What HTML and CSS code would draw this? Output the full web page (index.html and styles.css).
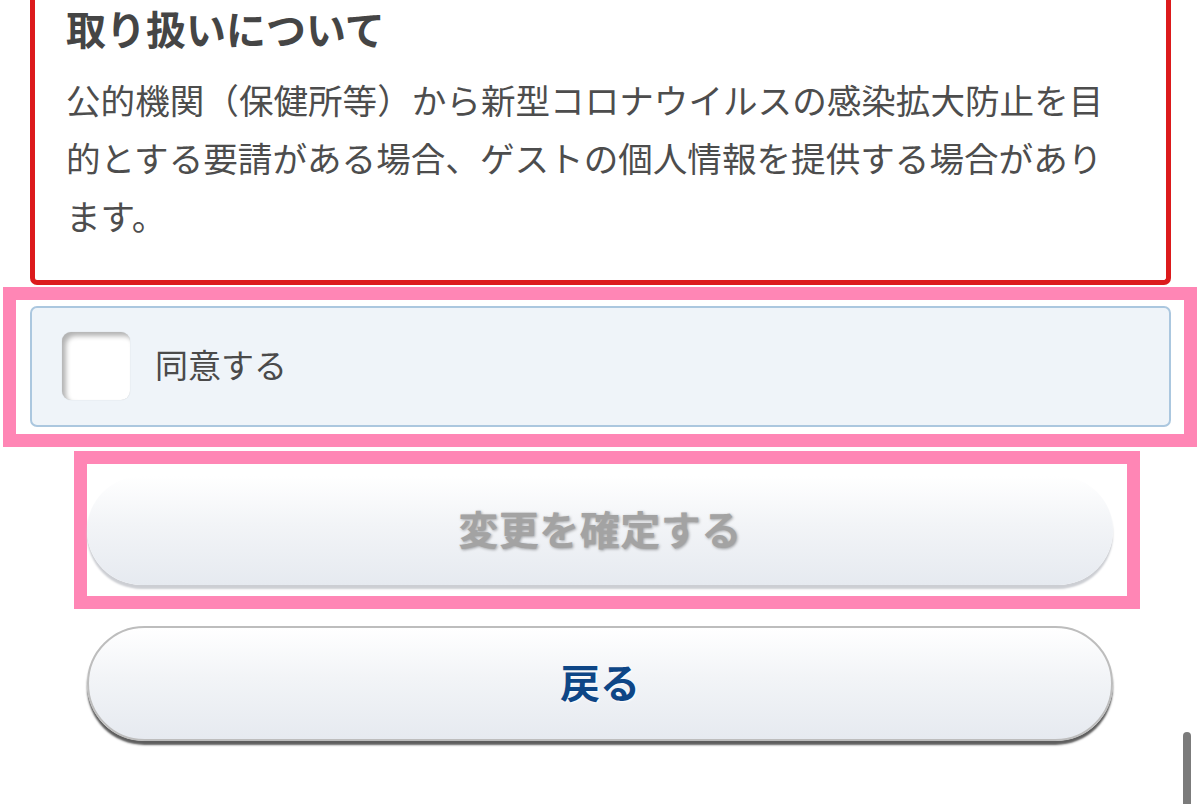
FILE: index.html
```html
<!DOCTYPE html>
<html lang="ja">
<head>
<meta charset="utf-8">
<title>取り扱いについて</title>
<link rel="stylesheet" href="styles.css">
</head>
<body>
<div class="page">
  <section class="notice">
    <h2 class="notice-title">取り扱いについて</h2>
    <p class="notice-text">公的機関（保健所等）から新型コロナウイルスの感染拡大防止を目的とする要請がある場合、ゲストの個人情報を提供する場合があります。</p>
  </section>
  <div class="highlight highlight-agree">
    <label class="agree">
      <span class="checkbox"></span>
      <span class="agree-label">同意する</span>
    </label>
  </div>
  <div class="highlight highlight-submit">
    <button class="btn btn-submit" type="button">変更を確定する</button>
  </div>
  <div class="back-row">
    <button class="btn btn-back" type="button">戻る</button>
  </div>
</div>
<div class="scrollbar"></div>
</body>
</html>
```
FILE: styles.css
```css
html, body {
  margin: 0;
  padding: 0;
  background: #ffffff;
  overflow: hidden;
}
body {
  width: 1200px;
  height: 804px;
  font-family: "Noto Sans CJK JP", "Noto Sans", sans-serif;
  color: #4a4a4a;
}
.page {
  display: flex;
  flex-direction: column;
  align-items: flex-start;
}
.notice {
  box-sizing: border-box;
  margin-left: 30px;
  width: 1141px;
  border: 5px solid #dc1a1c;
  border-top: 0;
  border-radius: 0 0 7px 7px;
  padding: 4px 38px 36px 31px;
}
.notice-title {
  margin: 0;
  font-size: 40px;
  line-height: 48px;
  font-weight: 700;
  color: #454545;
}
.notice-text {
  margin: 18px 0 0 0;
  font-size: 34.6px;
  line-height: 58px;
  color: #4d4d4d;
}
.highlight {
  box-sizing: border-box;
  border: 13px solid #ff86b5;
}
.highlight-agree {
  margin: 2px 0 0 3px;
  width: 1194px;
  padding: 6px 13px 7px 14px;
}
.agree {
  box-sizing: border-box;
  display: flex;
  align-items: center;
  gap: 25px;
  height: 121px;
  padding-left: 30px;
  border: 2px solid #abc7df;
  border-radius: 7px;
  background: #eff4f9;
}
.checkbox {
  width: 68px;
  height: 68px;
  margin-bottom: 2px;
  border-radius: 9px;
  background: #ffffff;
  box-shadow: inset 4px 4px 5px rgba(0, 0, 0, 0.3), 0 0 1px rgba(0, 0, 0, 0.2);
}
.agree-label {
  font-size: 33px;
  line-height: 40px;
  padding-bottom: 6px;
  color: #4a4a4a;
}
.highlight-submit {
  margin: 4px 0 0 74px;
  width: 1066px;
  padding: 12px 14px 11px 0;
}
.btn {
  box-sizing: border-box;
  display: flex;
  align-items: center;
  justify-content: center;
  width: 1026px;
  border-radius: 60px;
  font-family: "Noto Sans CJK JP", "Noto Sans", sans-serif;
  font-weight: 700;
  font-size: 40px;
  background: linear-gradient(#ffffff 0%, #f2f4f7 45%, #e6eaf0 100%);
  padding: 0;
}
.btn-submit {
  height: 109px;
  padding-bottom: 6px;
  border: 0;
  color: #a3a3a3;
  box-shadow: 0 4px 2px #ccced3;
  text-shadow: 1px 1px 3px rgba(0, 0, 0, 0.35);
  letter-spacing: 0.5px;
}
.back-row {
  margin: 17px 0 0 87px;
}
.btn-back {
  height: 115px;
  padding-bottom: 5px;
  border: 2px solid #bdbdbd;
  color: #0e4686;
  box-shadow: 0 4px 2px rgba(40, 40, 40, 0.75);
  text-shadow: 1px 1px 2px rgba(255, 255, 255, 0.9);
}
.scrollbar {
  position: fixed;
  top: 732px;
  left: 1183px;
  width: 8px;
  height: 80px;
  border-radius: 4px;
  background: #7b7b7b;
}
```
